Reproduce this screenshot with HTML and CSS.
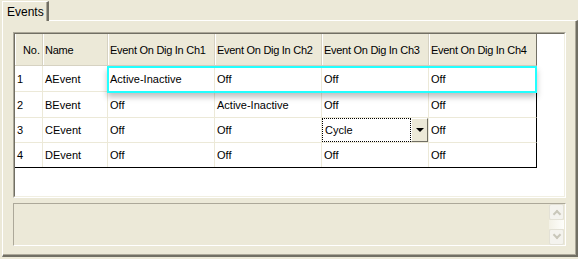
FILE: index.html
```
<!DOCTYPE html>
<html lang="en">
<head>
	<meta charset="UTF-8">
	<title>Events</title>
	<link rel="stylesheet" href="styles.css">
</head>
<body>
	<!-- 选项卡 -->
	<div class="tabs">
		<div class="tab">Events</div>
	</div>
	<!-- 选项卡页面 -->
	<div class="page">
		<div class="gridbox">
			<div class="grid">
				<div class="row head">
					<div class="cell num">No.</div>
					<div class="cell">Name</div>
					<div class="cell">Event On Dig In Ch1</div>
					<div class="cell">Event On Dig In Ch2</div>
					<div class="cell">Event On Dig In Ch3</div>
					<div class="cell">Event On Dig In Ch4</div>
				</div>
				<div class="row r1">
					<div class="cell">1</div>
					<div class="cell">AEvent</div>
					<div class="cell">Active-Inactive</div>
					<div class="cell">Off</div>
					<div class="cell">Off</div>
					<div class="cell">Off</div>
				</div>
				<div class="row r2">
					<div class="cell">2</div>
					<div class="cell">BEvent</div>
					<div class="cell">Off</div>
					<div class="cell">Active-Inactive</div>
					<div class="cell">Off</div>
					<div class="cell">Off</div>
				</div>
				<div class="row r3">
					<div class="cell">3</div>
					<div class="cell">CEvent</div>
					<div class="cell">Off</div>
					<div class="cell">Off</div>
					<div class="cell combo-cell">
						<div class="combo">
							<div class="combo-text">Cycle</div>
							<div class="combo-btn"><span class="arrow"></span></div>
						</div>
					</div>
					<div class="cell">Off</div>
				</div>
				<div class="row r4">
					<div class="cell">4</div>
					<div class="cell">DEvent</div>
					<div class="cell">Off</div>
					<div class="cell">Off</div>
					<div class="cell">Off</div>
					<div class="cell">Off</div>
				</div>
				<!-- 选中行的高亮框 -->
				<div class="hilite"></div>
			</div>
		</div>
		<!-- 下方文本框 -->
		<div class="memo">
			<div class="scroll">
				<div class="sbtn"><span class="up"></span></div>
				<div class="track"></div>
				<div class="sbtn"><span class="down"></span></div>
			</div>
		</div>
	</div>
</body>
</html>
```
FILE: styles.css
```
*{
	margin: 0;padding: 0;
	box-sizing: border-box;
}
body{
	width: 578px;
	height: 259px;
	background: #ece9d8;
	font: 11px "Liberation Sans", Arial, sans-serif;
	color: #000;
	overflow: hidden;
}
.tabs{
	height: 21px;
	margin-bottom: -1px;
	padding: 1px 0 0 2px;
	display: flex;
}
.tab{
	width: 47px;
	height: 20px;
	border-top: 1px solid #fff;
	border-left: 1px solid #fff;
	border-right: 2px solid #716f64;
	box-shadow: inset -1px 0 0 #aca899;
	padding: 3px 0 0 4px;
	font-size: 12px;
	position: relative;
	z-index: 1;
	background: #ece9d8;
}
.page{
	margin-left: 2px;
	width: 576px;
	height: 237px;
	border-top: 1px solid #fff;
	border-left: 1px solid #fff;
	border-right: 2px solid #716f64;
	border-bottom: 2px solid #716f64;
	box-shadow: inset -1px -1px 0 #aca899;
	padding: 11px 0 0 10px;
}
.gridbox{
	width: 553px;
	height: 166px;
	border-top: 1px solid #aca899;
	border-left: 1px solid #aca899;
	border-bottom: 1px solid #fff;
	border-right: 1px solid #fff;
}
.grid{
	width: 551px;
	height: 164px;
	border-top: 1px solid #716f64;
	border-left: 1px solid #716f64;
	border-bottom: 1px solid #f1efe2;
	border-right: 1px solid #f1efe2;
	background: #fff;
	position: relative;
}
.row{
	display: grid;
	grid-template-columns: 28px 65px 107px 107px 107px 107px;
	width: 522px;
	border-right: 1px solid #000;
	border-bottom: 1px solid #ece9d8;
	height: 26px;
}
.row .cell{
	border-right: 1px solid #ece9d8;
	padding-left: 2px;
	display: flex;
	align-items: center;
	white-space: nowrap;
	overflow: hidden;
}
.row .cell:last-child{
	border-right: none;
}
.head{
	height: 32px;
	background: #ece9d8;
	border-bottom: 1px solid #d6d2c2;
	border-right-color: #716f64;
	letter-spacing: -0.28px;
}
.head .cell{
	border-right: 1px solid #d6d2c2;
	box-shadow: inset 1px 0 0 #fff;
	padding-top: 1px;
}
.head .num{
	justify-content: flex-end;
	padding-right: 2px;
	letter-spacing: 0;
}
.r3{
	height: 25px;
}
.r4{
	height: 25px;
	border-bottom: 1px solid #000;
}
.combo-cell{
	padding-left: 0 !important;
}
.combo{
	display: flex;
	width: 106px;
	height: 24px;
}
.combo-text{
	flex: 1;
	border: 1px dotted #000;
	padding-left: 2px;
	display: flex;
	align-items: center;
}
.combo-btn{
	width: 17px;
	border-top: 1px solid #fff;
	border-left: 1px solid #fff;
	border-right: 1px solid #716f64;
	border-bottom: 1px solid #716f64;
	background: #ece9d8;
	display: flex;
	align-items: center;
	justify-content: center;
}
.arrow{
	width: 0;
	height: 0;
	border-left: 4px solid transparent;
	border-right: 4px solid transparent;
	border-top: 4px solid #000;
}
.hilite{
	position: absolute;
	left: 92px;
	top: 32px;
	width: 430px;
	height: 27px;
	border: 2px solid #2ff;
	box-shadow: 0 4px 6px rgba(0,0,0,0.25);
}
.memo{
	width: 553px;
	height: 43px;
	margin-top: 5px;
	border-top: 1px solid #aca899;
	border-left: 1px solid #aca899;
	border-bottom: 1px solid #fff;
	border-right: 1px solid #fff;
	display: flex;
	justify-content: flex-end;
}
.scroll{
	width: 15px;
	display: flex;
	flex-direction: column;
	margin-right: 1px;
}
.sbtn{
	height: 16px;
	border: 1px solid #e3e1d6;
	border-radius: 2px;
	background: #f4f3ee;
	display: flex;
	align-items: center;
	justify-content: center;
}
.track{
	flex: 1;
	background: linear-gradient(to right, #f3f1e6, #fefefb);
}
.up, .down{
	width: 6px;
	height: 6px;
	border-top: 2px solid #c9c7ba;
	border-left: 2px solid #c9c7ba;
}
.up{
	transform: translateY(2px) rotate(45deg);
}
.down{
	transform: translateY(-2px) rotate(225deg);
}
```
